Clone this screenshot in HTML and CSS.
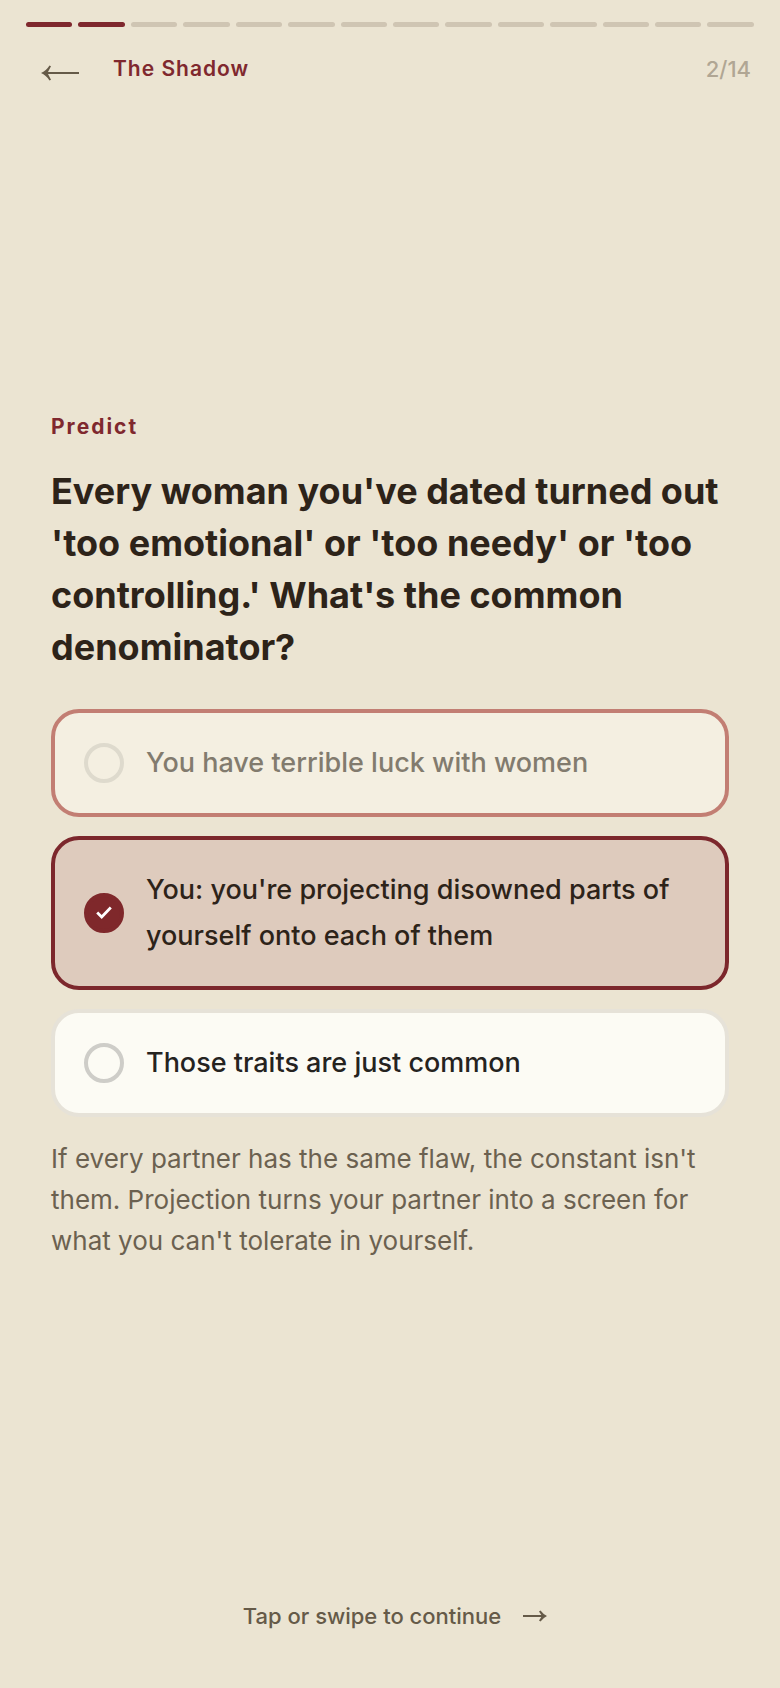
FILE: index.html
```html
<!DOCTYPE html>
<html lang="en">
<head>
  <meta charset="utf-8">
  <meta name="viewport" content="width=device-width, initial-scale=1">
  <title>The Shadow</title>
  <link rel="stylesheet" href="styles.css">
</head>
<body>
  <div class="lesson">
    <header class="top">
      <div class="progress" role="progressbar" aria-label="Lesson progress" aria-valuemin="0" aria-valuemax="14" aria-valuenow="2">
        <span class="step done"></span><span class="step done"></span><span class="step"></span><span class="step"></span><span class="step"></span><span class="step"></span><span class="step"></span><span class="step"></span><span class="step"></span><span class="step"></span><span class="step"></span><span class="step"></span><span class="step"></span><span class="step"></span>
      </div>
      <div class="bar">
        <button class="back" type="button" aria-label="Back">
          <svg width="38" height="16" viewBox="0 0 38 16" aria-hidden="true"><path d="M6 8H38" fill="none" stroke="currentColor" stroke-width="2"/><path d="M0 8Q5 6 8.500 .5L10 1.300Q8 5 6.500 8Q8 11 10 14.700L8.500 15.500Q5 10 0 8Z" fill="currentColor"/></svg>
        </button>
        <h1 class="title">The Shadow</h1>
        <span class="count">2/14</span>
      </div>
    </header>

    <main class="content">
      <p class="kicker">Predict</p>
      <fieldset class="quiz">
        <legend class="question">Every woman you've dated turned out 'too emotional' or 'too needy' or 'too controlling.' What's the common denominator?</legend>
        <div class="options">
          <label class="option wrong">
            <span class="mark"><input class="radio" type="radio" name="answer"></span>
            <span class="answer">You have terrible luck with women</span>
          </label>
          <label class="option chosen">
            <span class="mark">
              <input class="radio" type="radio" name="answer" checked>
              <svg class="tick" width="16" height="13" viewBox="0 0 16 13" aria-hidden="true"><path d="M1.200 6.500L5.700 11L14.800 1.500" fill="none" stroke="currentColor" stroke-width="2.800"/></svg>
            </span>
            <span class="answer">You: you're projecting disowned parts of yourself onto each of them</span>
          </label>
          <label class="option">
            <span class="mark"><input class="radio" type="radio" name="answer"></span>
            <span class="answer">Those traits are just common</span>
          </label>
        </div>
      </fieldset>
      <p class="explain">If every partner has the same flaw, the constant isn't them. Projection turns your partner into a screen for what you can't tolerate in yourself.</p>
    </main>

    <footer class="bottom">
      <button class="next" type="button">Tap or swipe to continue
        <svg width="24" height="12" viewBox="0 0 24 12" aria-hidden="true"><path d="M0 6H21" fill="none" stroke="currentColor" stroke-width="2"/><path d="M24 6Q20 4 17.500 .5L16 1.500L19 6L16 10.500L17.500 11.500Q20 8 24 6Z" fill="currentColor"/></svg>
      </button>
    </footer>
  </div>
</body>
</html>
```
FILE: styles.css
```css
* {
  box-sizing: border-box;
}

body {
  margin: 0;
  background: #ebe4d2;
  color: #2d2319;
  font-family: Inter, "Liberation Sans", sans-serif;
}

.lesson {
  display: flex;
  flex-direction: column;
  min-height: 100vh;
}

.top {
  padding: 22px 26px 0;
}

.progress {
  display: flex;
  gap: 6px;
}

.step {
  flex: 1;
  height: 5px;
  border-radius: 3px;
  background: #cfc5b3;
}

.step.done {
  background: #7f282e;
}

.bar {
  display: flex;
  align-items: center;
  padding: 26px 3px 0 15px;
}

.back {
  display: flex;
  padding: 8px 0 0;
  border: 0;
  background: none;
  color: #655a48;
}

.title {
  flex: 1;
  margin: 0 0 0 34px;
  color: #7f282e;
  font-size: 21px;
  font-weight: 600;
  line-height: 32px;
  letter-spacing: 1px;
}

.count {
  color: #b0a694;
  font-size: 22px;
  font-weight: 500;
  line-height: 32px;
}

.content {
  display: flex;
  flex: 1;
  flex-direction: column;
  justify-content: center;
  padding: 0 51px 14px;
}

.kicker {
  margin: 0;
  color: #7f282e;
  font-size: 21px;
  font-weight: 700;
  line-height: 32px;
  letter-spacing: 2px;
}

.quiz {
  min-width: 0;
  margin: 0;
  padding: 0;
  border: 0;
}

.question {
  padding: 22px 0 36px;
  font-size: 36px;
  font-weight: 700;
  line-height: 52px;
}

.options {
  display: flex;
  flex-direction: column;
  gap: 19px;
}

.option {
  display: flex;
  align-items: center;
  gap: 22px;
  padding: 27px 29px;
  border: 4px solid #e6e2d8;
  border-radius: 28px;
  background: #fcfbf4;
  color: #25231f;
}

.option.wrong {
  border-color: #c27e73;
  background: #f4efe1;
  color: #827b6e;
}

.option.chosen {
  border-color: #7c272c;
  background: #decbbd;
  color: #2d2319;
}

.mark {
  display: grid;
  flex: none;
  place-items: center;
}

.radio {
  grid-area: 1 / 1;
  width: 40px;
  height: 40px;
  margin: 0;
  border: 4px solid #cecdc8;
  border-radius: 50%;
  appearance: none;
}

.wrong .radio {
  border-color: #dedacd;
}

.radio:checked {
  border-color: #7f282b;
  background: #7f282b;
}

.tick {
  grid-area: 1 / 1;
  color: #ffffff;
}

.answer {
  font-size: 27px;
  font-weight: 500;
  line-height: 46px;
}

.explain {
  margin: 21px 0 0;
  color: #6b6150;
  font-size: 26px;
  line-height: 41px;
}

.bottom {
  display: flex;
  justify-content: center;
  padding: 0 0 56px 10px;
}

.next {
  display: flex;
  align-items: center;
  gap: 22px;
  padding: 0;
  border: 0;
  background: none;
  color: #655a48;
  font-family: inherit;
  font-size: 22px;
  font-weight: 500;
  line-height: 32px;
}
```
